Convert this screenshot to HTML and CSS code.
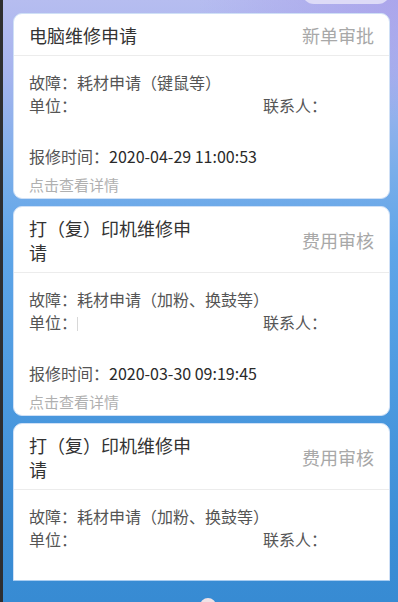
FILE: index.html
```html
<!DOCTYPE html>
<html lang="zh-CN">
<head>
<meta charset="utf-8">
<title>维修申请</title>
<link rel="stylesheet" href="styles.css">
</head>
<body>
<div class="app">
  <div class="edge"></div>
  <div class="main">
    <div class="pill"></div>
    <div class="list">
      <div class="card">
        <div class="card-head">
          <div class="title">电脑维修申请</div>
          <div class="status">新单审批</div>
        </div>
        <div class="card-body">
          <div class="line">故障：耗材申请（键鼠等）</div>
          <div class="row">
            <span>单位：</span>
            <span>联系人：</span>
          </div>
          <div class="line time">报修时间：<span class="val">2020-04-29 11:00:53</span></div>
          <div class="more">点击查看详情</div>
        </div>
      </div>
      <div class="card">
        <div class="card-head">
          <div class="title">打（复）印机维修申请</div>
          <div class="status">费用审核</div>
        </div>
        <div class="card-body">
          <div class="line">故障：耗材申请（加粉、换鼓等）</div>
          <div class="row">
            <span>单位：<span class="cursor"></span></span>
            <span>联系人：</span>
          </div>
          <div class="line time">报修时间：<span class="val">2020-03-30 09:19:45</span></div>
          <div class="more">点击查看详情</div>
        </div>
      </div>
      <div class="card card-cut">
        <div class="card-head">
          <div class="title">打（复）印机维修申请</div>
          <div class="status">费用审核</div>
        </div>
        <div class="card-body">
          <div class="line">故障：耗材申请（加粉、换鼓等）</div>
          <div class="row">
            <span>单位：</span>
            <span>联系人：</span>
          </div>
        </div>
      </div>
    </div>
    <div class="dot"></div>
  </div>
</div>
</body>
</html>
```

FILE: styles.css
```css
* {
  box-sizing: border-box;
}

html, body {
  margin: 0;
  padding: 0;
  width: 398px;
  height: 602px;
  overflow: hidden;
}

body {
  font-family: "Noto Sans CJK SC", "Noto Sans", sans-serif;
  color: #333;
}

.app {
  display: flex;
  width: 398px;
  height: 602px;
}

.edge {
  width: 3px;
  flex: 0 0 3px;
  background: #2e2e30;
}

.main {
  position: relative;
  flex: 1;
  padding: 13px 8px 0 10px;
  background:
    radial-gradient(ellipse 200px 120px at 100% 0%, rgba(165, 150, 232, 0.6), rgba(165, 150, 232, 0) 100%),
    linear-gradient(to bottom, #b6bdf0 0px, #a7b4ee 70px, #7aaeea 170px, #5ea5e8 250px, #4b99df 400px, #3b8dd5 540px, #378bd3 602px);
  overflow: hidden;
}

.pill {
  position: absolute;
  top: -20px;
  left: 299px;
  width: 88px;
  height: 24px;
  border-radius: 12px;
  background: #dddbf7;
}

.list {
  height: 568px;
  display: flex;
  flex-direction: column;
  gap: 7px;
  overflow: hidden;
  border-bottom: 1px solid #a9cdf1;
}

.card {
  flex: 0 0 auto;
  background: #fff;
  border: 1px solid #cfe0f6;
  border-radius: 9px;
}

.card-cut {
  min-height: 220px;
}

.card-head {
  display: flex;
  justify-content: space-between;
  align-items: center;
  padding: 9px 15px 8px;
  border-bottom: 1px solid #ececec;
  font-size: 18px;
  line-height: 24px;
}

.title {
  width: 172px;
  color: #333;
}

.status {
  color: #a8a8a8;
}

.card-body {
  padding: 15px 15px 2px;
  font-size: 16px;
  line-height: 23px;
  color: #555;
}

.row {
  display: grid;
  grid-template-columns: 234px 1fr;
}

.cursor {
  display: inline-block;
  width: 1px;
  height: 14px;
  background: #d8d8d8;
  vertical-align: -2px;
}

.time {
  margin-top: 28px;
  color: #555;
}

.val {
  color: #2a2a2a;
}

.more {
  margin-top: 5px;
  font-size: 15px;
  color: #b0b0b0;
}

.dot {
  position: absolute;
  left: 197px;
  top: 598px;
  width: 16px;
  height: 16px;
  border-radius: 50%;
  background: #efe2e6;
}
```
